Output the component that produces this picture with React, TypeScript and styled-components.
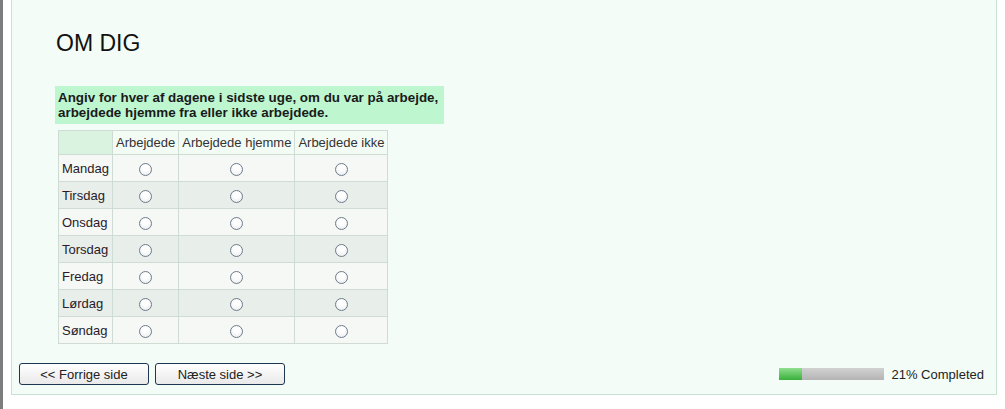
import { createGlobalStyle, styled } from "styled-components";

const GlobalStyle = createGlobalStyle`
  html, body {
    margin: 0;
    padding: 0;
    background: #ffffff;
  }
  body {
    font-family: "Liberation Sans", Arial, sans-serif;
    color: #1a1a1a;
  }
`;

const Page = styled.div`
  border-left: 3px solid #7d7d7d;
  padding: 0 8px 14px 8px;
  height: 409px;
  box-sizing: border-box;
`;

const Panel = styled.div`
  background: #f3fcf6;
  border: 1px solid #c9e3d3;
  border-top: none;
  padding: 30px 0 9px 0;
`;

const Title = styled.h1`
  margin: 0 0 30px 44px;
  font-size: 23px;
  font-weight: normal;
  line-height: 26px;
  color: #111;
`;

const Question = styled.div`
  margin-left: 43px;
  width: 384px;
  padding: 4px 2px 4px 3px;
  background: #bdf6cf;
  font-size: 13.4px;
  font-weight: bold;
  line-height: 15px;
  color: #1a1a1a;
`;

const Grid = styled.table`
  margin: 6px 0 0 46px;
  border-collapse: collapse;
  font-size: 13px;
`;

const HeadRow = styled.tr`
  height: 24px;
`;

const HeadCell = styled.th<{ $corner?: boolean }>`
  padding: 0 3px;
  font-weight: normal;
  line-height: 15px;
  color: #333;
  white-space: nowrap;
  background: ${(p) => (p.$corner ? "#d9f3e0" : "#f3fbf5")};
  border: 1px solid #cfdcd3;
`;

const Row = styled.tr<{ $alt: boolean }>`
  height: 27px;
  background: ${(p) => (p.$alt ? "#e8eee9" : "#f5f8f5")};
`;

const Label = styled.td`
  padding: 0 3px;
  line-height: 15px;
  text-align: left;
  color: #2a1a2a;
  border: 1px solid #cfdcd3;
`;

const Cell = styled.td`
  padding: 0;
  line-height: 15px;
  text-align: center;
  border: 1px solid #cfdcd3;
  vertical-align: middle;
`;

const Radio = styled.span`
  display: inline-block;
  width: 11px;
  height: 11px;
  border-radius: 50%;
  border: 1px solid #6e7c8a;
  background: radial-gradient(circle at 50% 35%, #ffffff 30%, #e4e7ea 100%);
  vertical-align: middle;
`;

const Footer = styled.div`
  display: flex;
  align-items: center;
  justify-content: space-between;
  margin-top: 19px;
  padding: 0 12px 0 7px;
`;

const Buttons = styled.div`
  display: flex;
  gap: 6px;
`;

const NavButton = styled.button`
  width: 130px;
  height: 22px;
  padding: 0;
  font-family: "Liberation Sans", Arial, sans-serif;
  font-size: 13px;
  color: #222;
  border: 1px solid #1d3652;
  border-radius: 3px;
  background: linear-gradient(#ffffff, #e9e9e9);
`;

const Progress = styled.div`
  display: flex;
  align-items: center;
  gap: 7px;
  font-size: 13px;
  color: #222;
`;

const Track = styled.div`
  width: 105px;
  height: 12px;
  background: linear-gradient(#d2d2d2, #b4b4b4);
  display: flex;
`;

const Fill = styled.div`
  height: 100%;
  background: linear-gradient(#8ede8e, #3ab03a);
`;

const days = ["Mandag", "Tirsdag", "Onsdag", "Torsdag", "Fredag", "Lørdag", "Søndag"];
const options = ["Arbejdede", "Arbejdede hjemme", "Arbejdede ikke"];

export default function App() {
  const percent = 21;
  return (
    <>
      <GlobalStyle />
      <Page>
        <Panel>
          <Title>OM DIG</Title>
          <Question>
            Angiv for hver af dagene i sidste uge, om du var på arbejde, arbejdede hjemme fra eller
            ikke arbejdede.
          </Question>
          <Grid>
            <thead>
              <HeadRow>
                <HeadCell $corner />
                {options.map((o) => (
                  <HeadCell key={o}>{o}</HeadCell>
                ))}
              </HeadRow>
            </thead>
            <tbody>
              {days.map((d, i) => (
                <Row key={d} $alt={i % 2 === 1}>
                  <Label>{d}</Label>
                  {options.map((o) => (
                    <Cell key={o}>
                      <Radio />
                    </Cell>
                  ))}
                </Row>
              ))}
            </tbody>
          </Grid>
          <Footer>
            <Buttons>
              <NavButton>&lt;&lt; Forrige side</NavButton>
              <NavButton>Næste side &gt;&gt;</NavButton>
            </Buttons>
            <Progress>
              <Track>
                <Fill style={{ width: `${percent}%` }} />
              </Track>
              {percent}% Completed
            </Progress>
          </Footer>
        </Panel>
      </Page>
    </>
  );
}
